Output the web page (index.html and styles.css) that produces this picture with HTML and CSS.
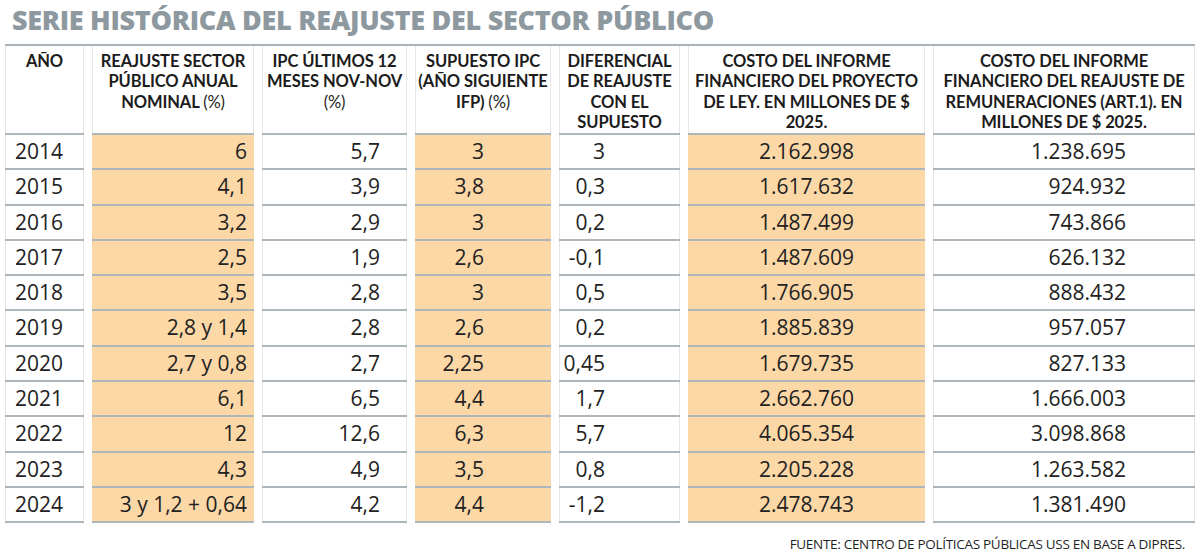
FILE: index.html
```html
<!DOCTYPE html>
<html lang="es">
<head>
<meta charset="utf-8">
<title>Serie histórica del reajuste del sector público</title>
<link rel="stylesheet" href="styles.css">
</head>
<body>
<div class="page">
  <h1 class="title">SERIE HISTÓRICA DEL REAJUSTE DEL SECTOR PÚBLICO</h1>
  <div class="grid">
    <div class="hd">AÑO</div>
    <div class="hd">REAJUSTE SECTOR<br>PÚBLICO ANUAL<br>NOMINAL <span class="pct">(%)</span></div>
    <div class="hd">IPC ÚLTIMOS 12<br>MESES NOV-NOV<br><span class="pct">(%)</span></div>
    <div class="hd">SUPUESTO IPC<br>(AÑO SIGUIENTE<br>IFP) <span class="pct">(%)</span></div>
    <div class="hd">DIFERENCIAL<br>DE REAJUSTE<br>CON EL<br>SUPUESTO</div>
    <div class="hd">COSTO DEL INFORME<br>FINANCIERO DEL PROYECTO<br>DE LEY. EN MILLONES DE $<br>2025.</div>
    <div class="hd">COSTO DEL INFORME<br>FINANCIERO DEL REAJUSTE DE<br>REMUNERACIONES (ART.1). EN<br>MILLONES DE $ 2025.</div>

    <div class="c c1">2014</div><div class="c c2 hl">6</div><div class="c c3">5,7</div><div class="c c4 hl">3</div><div class="c c5">3</div><div class="c c6 hl">2.162.998</div><div class="c c7">1.238.695</div>
    <div class="c c1">2015</div><div class="c c2 hl">4,1</div><div class="c c3">3,9</div><div class="c c4 hl">3,8</div><div class="c c5">0,3</div><div class="c c6 hl">1.617.632</div><div class="c c7">924.932</div>
    <div class="c c1">2016</div><div class="c c2 hl">3,2</div><div class="c c3">2,9</div><div class="c c4 hl">3</div><div class="c c5">0,2</div><div class="c c6 hl">1.487.499</div><div class="c c7">743.866</div>
    <div class="c c1">2017</div><div class="c c2 hl">2,5</div><div class="c c3">1,9</div><div class="c c4 hl">2,6</div><div class="c c5">-0,1</div><div class="c c6 hl">1.487.609</div><div class="c c7">626.132</div>
    <div class="c c1">2018</div><div class="c c2 hl">3,5</div><div class="c c3">2,8</div><div class="c c4 hl">3</div><div class="c c5">0,5</div><div class="c c6 hl">1.766.905</div><div class="c c7">888.432</div>
    <div class="c c1">2019</div><div class="c c2 hl">2,8 y 1,4</div><div class="c c3">2,8</div><div class="c c4 hl">2,6</div><div class="c c5">0,2</div><div class="c c6 hl">1.885.839</div><div class="c c7">957.057</div>
    <div class="c c1">2020</div><div class="c c2 hl">2,7 y 0,8</div><div class="c c3">2,7</div><div class="c c4 hl">2,25</div><div class="c c5">0,45</div><div class="c c6 hl">1.679.735</div><div class="c c7">827.133</div>
    <div class="c c1">2021</div><div class="c c2 hl">6,1</div><div class="c c3">6,5</div><div class="c c4 hl">4,4</div><div class="c c5">1,7</div><div class="c c6 hl">2.662.760</div><div class="c c7">1.666.003</div>
    <div class="c c1">2022</div><div class="c c2 hl">12</div><div class="c c3">12,6</div><div class="c c4 hl">6,3</div><div class="c c5">5,7</div><div class="c c6 hl">4.065.354</div><div class="c c7">3.098.868</div>
    <div class="c c1">2023</div><div class="c c2 hl">4,3</div><div class="c c3">4,9</div><div class="c c4 hl">3,5</div><div class="c c5">0,8</div><div class="c c6 hl">2.205.228</div><div class="c c7">1.263.582</div>
    <div class="c c1">2024</div><div class="c c2 hl">3 y 1,2 + 0,64</div><div class="c c3">4,2</div><div class="c c4 hl">4,4</div><div class="c c5">-1,2</div><div class="c c6 hl">2.478.743</div><div class="c c7">1.381.490</div>
  </div>
  <p class="source">FUENTE: CENTRO DE POLÍTICAS PÚBLICAS USS EN BASE A DIPRES.</p>
</div>
</body>
</html>
```

FILE: styles.css
```css
html, body {
  margin: 0;
  padding: 0;
  background: #ffffff;
}

.page {
  width: 1190px;
  padding: 0 5px;
  font-family: "Open Sans", "Liberation Sans", sans-serif;
  color: #1f1f1f;
}

.title {
  margin: 0;
  padding: 3px 0 0 7px;
  box-sizing: border-box;
  height: 46px;
  font-size: 27px;
  line-height: 34px;
  font-weight: 800;
  color: #8e999f;
  letter-spacing: -0.3px;
  border-bottom: 2px solid #a8b2b8;
  white-space: nowrap;
}

.grid {
  display: grid;
  grid-template-columns: 79px 162px 145px 136px 121px 237px 262px;
  grid-template-rows: 89px repeat(11, 35.3px);
  column-gap: 8px;
}

.hd {
  box-sizing: border-box;
  padding: 5px 0 0;
  font-family: Lato, "Open Sans", sans-serif;
  font-size: 16.5px;
  line-height: 20.3px;
  font-weight: 700;
  text-align: center;
  letter-spacing: -0.1px;
  white-space: nowrap;
  color: #1c1c1c;
  border-bottom: 2px solid #adb6bb;
  box-shadow: inset 1px 0 #e6e6e6, inset -1px 0 #e6e6e6;
}

.pct {
  font-weight: 400;
}

.c {
  box-sizing: border-box;
  font-size: 21px;
  line-height: 33px;
  color: #222;
  border-bottom: 2px solid #adb6bb;
  box-shadow: inset 1px 0 #e6e6e6, inset -1px 0 #e6e6e6;
  white-space: nowrap;
}

.hl {
  background: #fdd8a7;
  box-shadow: none;
}

.c1 { text-align: left; padding-left: 10px; }
.c2 { text-align: right; padding-right: 7px; }
.c3 { text-align: right; padding-right: 27px; }
.c4 { text-align: right; padding-right: 67px; }
.c5 { text-align: right; padding-right: 75px; }
.c6 { text-align: center; }
.c7 { text-align: right; padding-right: 69px; }

.source {
  margin: 13px 10px 0 0;
  text-align: right;
  font-size: 13.5px;
  line-height: 16px;
  letter-spacing: -0.3px;
  color: #1f1f1f;
}
```
